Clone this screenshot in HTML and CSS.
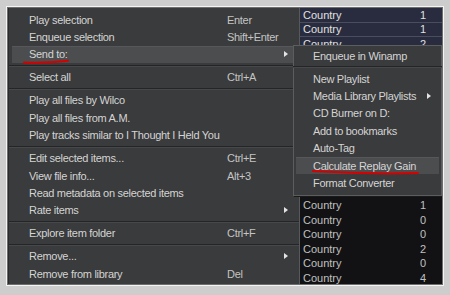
FILE: index.html
```html
<!DOCTYPE html>
<html>
<head>
<meta charset="utf-8">
<link rel="stylesheet" href="styles.css">
</head>
<body>
<div class="frame">
  <div class="screen">
    <div class="menu main">
      <div class="item"><span class="label">Play selection</span><span class="key">Enter</span></div>
      <div class="item"><span class="label">Enqueue selection</span><span class="key">Shift+Enter</span></div>
      <div class="item hl"><span class="label">Send to:</span><span class="key"></span><span class="arrow"></span></div>
      <div class="sep"></div>
      <div class="item"><span class="label">Select all</span><span class="key">Ctrl+A</span></div>
      <div class="sep"></div>
      <div class="item"><span class="label">Play all files by Wilco</span></div>
      <div class="item"><span class="label">Play all files from A.M.</span></div>
      <div class="item"><span class="label">Play tracks similar to I Thought I Held You</span></div>
      <div class="sep"></div>
      <div class="item"><span class="label">Edit selected items...</span><span class="key">Ctrl+E</span></div>
      <div class="item"><span class="label">View file info...</span><span class="key">Alt+3</span></div>
      <div class="item"><span class="label">Read metadata on selected items</span></div>
      <div class="item"><span class="label">Rate items</span><span class="key"></span><span class="arrow"></span></div>
      <div class="sep"></div>
      <div class="item"><span class="label">Explore item folder</span><span class="key">Ctrl+F</span></div>
      <div class="sep"></div>
      <div class="item"><span class="label">Remove...</span><span class="key"></span><span class="arrow"></span></div>
      <div class="item"><span class="label">Remove from library</span><span class="key">Del</span></div>
    </div>
    <div class="list">
      <div class="row sel"><span>Country</span><span>1</span></div>
      <div class="row sel"><span>Country</span><span>1</span></div>
      <div class="row sel"><span>Country</span><span>2</span></div>
      <div class="row sel"></div>
      <div class="row sel"></div>
      <div class="row sel"></div>
      <div class="row sel"></div>
      <div class="row"></div>
      <div class="row"></div>
      <div class="row"></div>
      <div class="row"></div>
      <div class="row"></div>
      <div class="row"></div>
      <div class="row"><span>Country</span><span>1</span></div>
      <div class="row"><span>Country</span><span>0</span></div>
      <div class="row"><span>Country</span><span>0</span></div>
      <div class="row"><span>Country</span><span>2</span></div>
      <div class="row"><span>Country</span><span>0</span></div>
      <div class="row"><span>Country</span><span>4</span></div>
    </div>
    <div class="menu sub">
      <div class="item"><span class="label">Enqueue in Winamp</span></div>
      <div class="sep"></div>
      <div class="item"><span class="label">New Playlist</span></div>
      <div class="item"><span class="label">Media Library Playlists</span><span class="arrow"></span></div>
      <div class="item"><span class="label">CD Burner on D:</span></div>
      <div class="item"><span class="label">Add to bookmarks</span></div>
      <div class="item"><span class="label">Auto-Tag</span></div>
      <div class="item hl"><span class="label">Calculate Replay Gain</span></div>
      <div class="item"><span class="label">Format Converter</span></div>
    </div>
    <svg class="ink" width="434" height="276" viewBox="0 0 434 276">
      <path d="M16 54.5 Q36 55.5 60 52.8" />
      <path d="M305 163 Q360 166.5 410 165" />
    </svg>
  </div>
</div>
</body>
</html>
```
FILE: styles.css
```css
html, body {
  margin: 0;
  padding: 0;
}
body {
  background: #cdcdcd;
  width: 450px;
  height: 295px;
  overflow: hidden;
  font-family: "Liberation Sans", Arial, sans-serif;
  font-size: 11px;
  letter-spacing: -0.3px;
}
.frame {
  padding: 8px 8px 11px 8px;
}
.screen {
  position: relative;
  width: 434px;
  height: 276px;
  display: grid;
  grid-template-columns: 292px 142px;
  overflow: hidden;
  background: #121214;
  box-shadow: 0 0 0 1px #6e6e6e, 0 0 0 2px #f4f4f4;
}
.menu {
  background: #3a3b3c;
  color: #d4d4d4;
  box-sizing: border-box;
}
.main {
  padding: 3px 3px;
  border-right: 1px solid #58595a;
  border-left: 1px solid #2a2b2c;
  height: 276px;
}
.item {
  display: grid;
  grid-template-columns: 17px 198px 1fr 12px;
  align-items: center;
  height: 17.4px;
  white-space: nowrap;
}
.item .label {
  grid-column: 2;
}
.item .key {
  grid-column: 3;
  color: #c4c4c4;
}
.item .arrow {
  grid-column: 4;
  width: 0;
  height: 0;
  border-left: 4px solid #e4e4e4;
  border-top: 3.5px solid transparent;
  border-bottom: 3.5px solid transparent;
}
.item.hl {
  background: #4b4d4f;
  box-shadow: inset 0 1px 0 #55575a;
}
.sep {
  height: 5.6px;
  margin: 0 -3px;
  display: flex;
  flex-direction: column;
  justify-content: center;
}
.sep::before {
  content: "";
  display: block;
  height: 1px;
  background: #242526;
}
.sep::after {
  content: "";
  display: block;
  height: 1px;
  background: #47484a;
}
.list {
  display: flex;
  flex-direction: column;
  color: #c0c0c0;
  letter-spacing: 0;
}
.row {
  flex: none;
  height: 14.6px;
  display: flex;
  justify-content: space-between;
  align-items: center;
  padding: 0 16px 0 3px;
  box-sizing: border-box;
}
.row.sel {
  background: #292c3e;
  color: #e0e0e0;
  border-bottom: 1px solid #4a4d5e;
}
.sub {
  position: absolute;
  left: 285px;
  top: 37px;
  width: 149px;
  height: 151px;
  padding: 1px 2px;
  border: 1px solid #5c5d5f;
  box-shadow: 1px 1px 0 #1a1a1a;
}
.sub .item {
  grid-template-columns: 17px 1fr 12px;
}
.sub .item .arrow {
  grid-column: 3;
}
.ink {
  position: absolute;
  left: 0;
  top: 0;
  pointer-events: none;
}
.ink path {
  fill: none;
  stroke: #d60000;
  stroke-width: 2;
  stroke-linecap: round;
}
```
